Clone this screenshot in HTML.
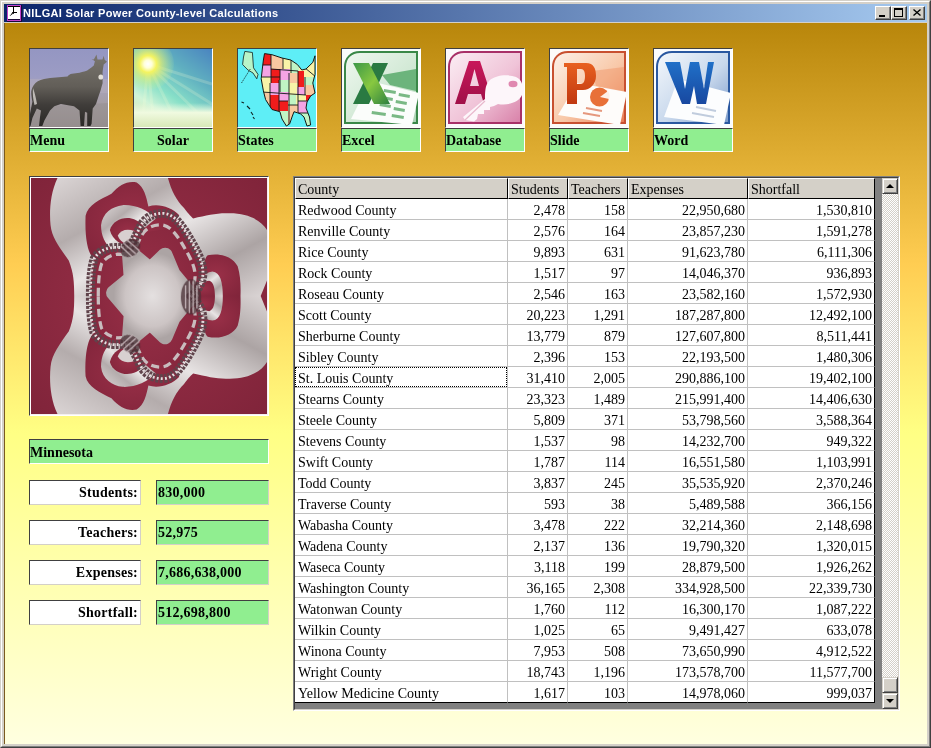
<!DOCTYPE html>
<html><head><meta charset="utf-8">
<style>
*{margin:0;padding:0;box-sizing:border-box}
html,body{width:931px;height:748px;overflow:hidden;background:#d4d0c8}
body{position:relative;font-family:"Liberation Sans",sans-serif;-webkit-font-smoothing:antialiased}
#grid,.lbl,.sl,.sv,#ttext{will-change:transform}
.a{position:absolute}
#frame{left:0;top:0;width:931px;height:748px;background:#d4d0c8;border-top:1px solid #d4d0c8;border-left:1px solid #d4d0c8;border-right:1px solid #404040;border-bottom:1px solid #404040}
#frame2{left:1px;top:1px;width:929px;height:746px;border-top:1px solid #fff;border-left:1px solid #fff;border-right:1px solid #808080;border-bottom:1px solid #808080}
#title{left:4px;top:4px;width:923px;height:18px;background:linear-gradient(to right,#0a246a,#a6caf0)}
#ttext{left:23px;top:7px;color:#fff;font:bold 11px "Liberation Sans",sans-serif;letter-spacing:.32px;white-space:nowrap;line-height:13px}
.cbtn{top:6px;width:16px;height:14px;background:#d4d0c8;border-top:1px solid #fff;border-left:1px solid #fff;border-right:1px solid #404040;border-bottom:1px solid #404040;box-shadow:inset -1px -1px 0 #808080}
#client{left:4px;top:23px;width:923px;height:721px;background:linear-gradient(to bottom,rgb(184,134,11) 0px,rgb(255,205,82) 241px,rgb(255,255,132) 410px,rgb(255,255,225) 725px);border-left:1px solid #7a5a20}
.ibox{width:80px;height:80px;border-top:1px solid #404040;border-left:1px solid #404040;border-right:1px solid #fff;border-bottom:1px solid #fff;overflow:hidden}
.ibox svg{display:block}
.lbl{padding-top:2px;width:80px;height:24px;background:#90ee90;border-top:1px solid #404040;border-left:1px solid #404040;border-right:1px solid #fff;border-bottom:1px solid #fff;font:bold 14px "Liberation Serif",serif;color:#000;line-height:20px;padding-left:0;white-space:nowrap;overflow:hidden}
.sl{padding-top:1px;letter-spacing:.25px;width:112px;height:25px;background:#fff;border-top:1px solid #404040;border-left:1px solid #404040;border-right:1px solid #d4d0c8;border-bottom:1px solid #d4d0c8;font:bold 14px "Liberation Serif",serif;text-align:right;padding-right:2px;line-height:21px;white-space:nowrap}
.sv{padding-top:1px;letter-spacing:.25px;width:113px;height:25px;background:#90ee90;border-top:1px solid #404040;border-left:1px solid #404040;border-right:1px solid #d4d0c8;border-bottom:1px solid #d4d0c8;font:bold 14px "Liberation Serif",serif;padding-left:1px;line-height:21px;white-space:nowrap}
#grid{left:293px;top:176px;width:607px;height:535px;border-top:1px solid #808080;border-left:1px solid #808080;border-right:1px solid #fff;border-bottom:1px solid #fff;background:#808080}
#grid2{left:0;top:0;width:605px;height:533px;border-top:1px solid #404040;border-left:1px solid #404040;border-right:1px solid #d4d0c8;border-bottom:1px solid #d4d0c8;background:#808080}
.hd{top:0;padding-top:1px;height:21px;background:#d4d0c8;border-top:1px solid #fff;border-left:1px solid #fff;border-right:1px solid #000;border-bottom:1px solid #000;font:14px "Liberation Serif",serif;line-height:19px;padding-left:2px;white-space:nowrap;overflow:hidden}
.row{left:0;height:21px;width:580px;background:#fff}
.c{position:absolute;top:0;padding-top:2px;height:21px;border-right:1px solid #c0c0c0;border-bottom:1px solid #c0c0c0;font:14px "Liberation Serif",serif;line-height:20px;white-space:nowrap;overflow:hidden}
.c.n{text-align:right;padding-right:2px}
.c.t{padding-left:3px}

#focus{left:0;top:189px;width:212px;height:20px;border:1px dotted #000}
#sb{left:587px;top:0;width:16px;height:531px;background-color:#fff;background-image:linear-gradient(45deg,#d4d0c8 25%,transparent 25%,transparent 75%,#d4d0c8 75%),linear-gradient(45deg,#d4d0c8 25%,transparent 25%,transparent 75%,#d4d0c8 75%);background-size:2px 2px;background-position:0 0,1px 1px}
.sbb{left:0;width:16px;height:16px;background:#d4d0c8;border-top:1px solid #d4d0c8;border-left:1px solid #d4d0c8;border-right:1px solid #404040;border-bottom:1px solid #404040;box-shadow:inset 1px 1px 0 #fff,inset -1px -1px 0 #808080}
.arr{position:absolute;left:3px;width:0;height:0;border-left:4px solid transparent;border-right:4px solid transparent}
.arr.up{top:5px;border-bottom:4px solid #000}
.arr.dn{top:5px;border-top:4px solid #000}
#frac{left:29px;top:176px;width:240px;height:240px;border-top:1px solid #404040;border-left:1px solid #404040;border-right:1px solid #fff;border-bottom:1px solid #fff;background:#8a2a40;overflow:hidden}
#frac2{left:0;top:0;width:238px;height:238px;border-top:1px solid #fff;border-left:1px solid #fff;border-right:1px solid #f4f0f0;border-bottom:1px solid #f4f0f0;overflow:hidden}
</style></head><body>
<div id="frame" class="a"></div>
<div id="frame2" class="a"></div>
<div id="title" class="a"></div>
<div id="ttext" class="a">NILGAI Solar Power County-level Calculations</div>
<svg class="a" style="left:7px;top:5px" width="15" height="17" viewBox="0 0 15 17"><rect x="0" y="0" width="15" height="17" fill="#1a0838"/><rect x="0.5" y="0.5" width="13" height="15" fill="none" stroke="#c040c8" stroke-width="1"/><rect x="1" y="1" width="12" height="13" fill="#fff"/><rect x="1" y="1" width="12" height="1" fill="#000"/><rect x="6" y="1" width="1" height="7" fill="#000"/><rect x="6" y="7" width="4" height="1" fill="#000"/><path d="M6.5,7.5 L3,10.5" stroke="#000" stroke-width="1.2" stroke-dasharray="1.2 .8"/><circle cx="6" cy="8" r="1" fill="#000"/></svg>
<div class="cbtn a" style="left:875px"><div class="a" style="left:3px;top:8px;width:6px;height:2px;background:#000"></div></div>
<div class="cbtn a" style="left:891px"><div class="a" style="left:2px;top:1px;width:9px;height:9px;border:1px solid #000;border-top-width:2px"></div></div>
<div class="cbtn a" style="left:909px"><svg class="a" style="left:3px;top:2px" width="8" height="7" viewBox="0 0 8 7"><path d="M0.5,0.5 L7.5,6.5 M7.5,0.5 L0.5,6.5" stroke="#000" stroke-width="1.35"/></svg></div>
<div id="client" class="a"></div>

<div class="ibox a" style="left:29px;top:48px"><svg width="78" height="78" viewBox="0 0 78 78">
<defs><linearGradient id="nsky" x1="0" y1="0" x2="0" y2="1"><stop offset="0" stop-color="#9496c2"/><stop offset=".35" stop-color="#9c9cc4"/><stop offset=".5" stop-color="#a8a2b8"/><stop offset=".75" stop-color="#a49c9e"/><stop offset="1" stop-color="#9a9292"/></linearGradient>
<linearGradient id="nbody" x1="0" y1="0" x2="0" y2="1"><stop offset="0" stop-color="#7a766e"/><stop offset=".45" stop-color="#625e58"/><stop offset=".7" stop-color="#403d3a"/><stop offset="1" stop-color="#2a2826"/></linearGradient></defs>
<rect width="78" height="78" fill="url(#nsky)"/>
<rect y="30" width="78" height="14" fill="#b8b0bc" opacity=".45"/><path d="M0,58 L78,54 L78,78 L0,78 Z" fill="#8c8688" opacity=".35"/>
<path d="M3.5,36.4 C6,33 9,31 14,30 L20,29 L37.5,27.6 C38.5,26 40,25 42,24.8 L49.5,23.8 C53,23 56,22 57.2,21.6 C60,19.5 62.5,18 63.8,16.6 L64.9,12.3 L61.6,10 L63.8,10.5 L66.5,5.5 L67.5,10.5 L72.5,10.5 L73.7,6.8 L74.6,10.8 L77,12.8 L73.7,15.5 C73.3,18 72.8,21 72.6,23.2 L72.6,34.2 C71.5,38 70.5,42 69.3,45.1 C68,49 67,52 66,55 L62.7,59.4 L61.6,74.8 L60.5,77 L57.2,77 L57.2,63.8 L55,62.7 L54,77 L50.6,77 L49.5,61.6 L44,57.2 L30.9,55 L24.3,57.2 L20,61.6 L14.4,71.5 L12.3,77 L9,77 L10,68 L11,61.6 L6.8,59.4 L2.4,69 L0.5,77 L-2,77 L0.2,63.8 L2.4,52.8 C1.5,48 1,44 1.3,41.9 C2,39 2.8,37.5 3.5,36.4 Z" fill="url(#nbody)"/>
<ellipse cx="70.8" cy="28" rx="2.4" ry="2.6" fill="#e4e0d8"/>
<path d="M3,39 C5,44 6,50 7,55 L4.5,56 C3,50 2.5,45 3,39 Z" fill="#d8d4d0" opacity=".8"/>
</svg></div>
<div class="lbl a" style="left:29px;top:128px">Menu</div>
<div class="ibox a" style="left:133px;top:48px"><svg width="78" height="78" viewBox="0 0 78 78">
<defs><linearGradient id="ssky" x1="1" y1="0" x2="0.3" y2="1"><stop offset="0" stop-color="#4a84c0"/><stop offset=".35" stop-color="#60b0c0"/><stop offset=".65" stop-color="#88e0c8"/><stop offset=".85" stop-color="#d0f4d8"/><stop offset="1" stop-color="#d8ecc0"/></linearGradient>
<radialGradient id="ssun" cx="14" cy="15" r="28" gradientUnits="userSpaceOnUse"><stop offset="0" stop-color="#ffffff"/><stop offset=".14" stop-color="#ffffd8"/><stop offset=".3" stop-color="#f4f460"/><stop offset=".5" stop-color="#e8f070" stop-opacity=".65"/><stop offset="1" stop-color="#c0f0a0" stop-opacity="0"/></radialGradient>
<linearGradient id="shor" x1="0" y1="0" x2="0" y2="1"><stop offset="0" stop-color="#e8f8e0" stop-opacity="0"/><stop offset=".4" stop-color="#f0fae0"/><stop offset="1" stop-color="#d8e8b8"/></linearGradient></defs>
<rect width="78" height="78" fill="url(#ssky)"/>
<g stroke="#f8ffd8" stroke-opacity=".2" stroke-width="3">
<path d="M14,15 L78,55 M14,15 L70,70 M14,15 L20,78 M14,15 L8,78 M14,15 L78,35 M14,15 L45,78"/></g>
<rect y="54" width="78" height="24" fill="url(#shor)"/>
<circle cx="14" cy="15" r="26" fill="url(#ssun)"/>
</svg></div>
<div class="lbl a" style="left:133px;top:128px;text-align:center">Solar</div>
<div class="ibox a" style="left:237px;top:48px"><svg width="78" height="78" viewBox="0 0 78 78">
<defs><clipPath id="usa"><path d="M26.5,4.6 L34,5.7 L44,9 L52.8,11 L59.4,15.5 L63.8,21 L68,20 L74.8,13.4 L77,6.8 L77,25.4 L74.8,34 L77,44 L72.6,47 L69,53 L68,59 L71.5,68 L72.6,76 L69,77 L66,68 L62.7,65 L59.4,63.8 L56,62.7 L54,68 L51.7,74.8 L48.4,77 L44,70 L41.9,62.7 L34,60.5 L31,56 L27.6,50.6 L25.4,41.9 L23.2,29.8 L24.3,20 L25.4,11 Z"/></clipPath></defs>
<rect width="78" height="78" fill="#5eeef6"/>
<path d="M6.8,2.4 L14.4,3.5 L15.5,18.8 L20,25.4 L18.8,29.8 L15,24 L10,21 L6,17 L4.6,15.5 L5.5,8 Z" fill="#b8f4c8" stroke="#102020" stroke-width=".8"/>
<path d="M12.3,20 L3.5,34" stroke="#102020" stroke-width=".8" stroke-dasharray="1.5 1"/>
<path d="M3.5,53 L6,54 M9,57 L12,60 M13,63 L15,66 M15,68 L16.5,70" stroke="#102020" stroke-width="1.1"/>
<g clip-path="url(#usa)">
<rect x="20" y="0" width="60" height="80" fill="#f8f4a8"/>
<rect x="24" y="3" width="9" height="13" fill="#f01c1c"/>
<rect x="33" y="6" width="12" height="14" fill="#f8c8a0"/>
<rect x="45" y="8" width="8" height="12" fill="#f8f4a8"/>
<rect x="53" y="10" width="8" height="14" fill="#c0f4c4"/>
<rect x="61" y="14" width="17" height="14" fill="#f8f4a8"/>
<rect x="24" y="16" width="9" height="12" fill="#f4a4e4"/>
<rect x="33" y="20" width="9" height="14" fill="#f01c1c"/>
<rect x="42" y="20" width="10" height="11" fill="#f4a4e4"/>
<rect x="52" y="24" width="8" height="10" fill="#f8c8a0"/>
<rect x="60" y="22" width="6" height="16" fill="#f01c1c"/>
<rect x="66" y="28" width="12" height="8" fill="#c0f4c4"/>
<rect x="24" y="28" width="8" height="15" fill="#f8f4a8"/>
<rect x="32" y="34" width="9" height="12" fill="#f4a4e4"/>
<rect x="41" y="31" width="10" height="12" fill="#c0f4c4"/>
<rect x="51" y="34" width="8" height="12" fill="#f8f4a8"/>
<rect x="59" y="38" width="8" height="8" fill="#f4a4e4"/>
<rect x="67" y="36" width="11" height="10" fill="#f8c8a0"/>
<rect x="24" y="43" width="8" height="12" fill="#f8c8a0"/>
<rect x="32" y="46" width="9" height="16" fill="#f01c1c"/>
<rect x="41" y="43" width="10" height="9" fill="#f4a4e4"/>
<rect x="51" y="46" width="7" height="10" fill="#c0f4c4"/>
<rect x="58" y="46" width="10" height="6" fill="#f8f4a8"/>
<rect x="68" y="46" width="10" height="8" fill="#f01c1c"/>
<rect x="41" y="52" width="9" height="10" fill="#f01c1c"/>
<rect x="50" y="56" width="10" height="22" fill="#f8c8a0"/>
<rect x="60" y="52" width="10" height="12" fill="#f4a4e4"/>
<rect x="40" y="62" width="10" height="16" fill="#c0f4c4"/>
<rect x="60" y="64" width="18" height="14" fill="#c0f4c4"/>
<g stroke="#101818" stroke-width=".9" fill="none"><path d="M24,16 L33,16 L33,34 M24,28 L42,28 M33,20 L60,22 M42,20 L42,43 M24,43 L68,46 M32,34 L32,62 M41,31 L41,78 M51,24 L51,78 M60,22 L60,64 M67,28 L67,46 M33,6 L33,16 M45,8 L45,20 M53,10 L53,24 M41,52 L50,52 M50,56 L60,56 M60,52 L78,52 M60,64 L78,64 M61,14 L78,28"/></g>
</g>
<path d="M26.5,4.6 L34,5.7 L44,9 L52.8,11 L59.4,15.5 L63.8,21 L68,20 L74.8,13.4 L77,6.8 L77,25.4 L74.8,34 L77,44 L72.6,47 L69,53 L68,59 L71.5,68 L72.6,76 L69,77 L66,68 L62.7,65 L59.4,63.8 L56,62.7 L54,68 L51.7,74.8 L48.4,77 L44,70 L41.9,62.7 L34,60.5 L31,56 L27.6,50.6 L25.4,41.9 L23.2,29.8 L24.3,20 L25.4,11 Z" fill="none" stroke="#101818" stroke-width="1"/>
</svg></div>
<div class="lbl a" style="left:237px;top:128px">States</div>
<div class="ibox a" style="left:341px;top:48px"><svg width="78" height="78" viewBox="0 0 78 78">
<defs><linearGradient id="xbg" x1="0" y1="0" x2="1" y2="1"><stop offset="0" stop-color="#f0f8f0"/><stop offset=".6" stop-color="#d0e8d4"/><stop offset="1" stop-color="#a8d0b0"/></linearGradient>
<linearGradient id="xl" x1="0" y1="0" x2="1" y2="1"><stop offset="0" stop-color="#3c9848"/><stop offset=".5" stop-color="#88c840"/><stop offset="1" stop-color="#2c8040"/></linearGradient></defs>
<rect width="78" height="78" fill="#fafcfa"/>
<path d="M3,74 L3,18 C3,9 9,3 18,3 L75,3 L75,74 Z" fill="url(#xbg)" stroke="#3a8848" stroke-width="2"/>
<path d="M40,26 L74,20 L74,42 L48,36 Z" fill="#6cb47c"/>
<path d="M28,32 L77,44 L70,76 L9,70 Z" fill="#fbfdfb"/>
<g fill="#5aa868"><path d="M42,40 l12,2 l-.5,3 l-12,-2 Z M57,44 l11,2 l-.5,3 l-11,-2 Z M40,47 l11,2 l-.5,3 l-11,-2 Z M54,51 l11,2 l-.5,3 l-11,-2 Z M38,54 l11,2 l-.5,3 l-11,-2 Z M52,58 l11,2 l-.5,3 l-11,-2 Z M30,62 l14,2 l-.5,3 l-14,-2 Z M50,65 l12,2 l-.5,3 l-12,-2 Z" opacity=".8"/></g>
<path d="M31,14 L46,14 L27,55 L11,55 Z" fill="#2a7a42"/>
<path d="M11,14 L27,14 L48,55 L32,55 Z" fill="url(#xl)"/>
</svg></div>
<div class="lbl a" style="left:341px;top:128px">Excel</div>
<div class="ibox a" style="left:445px;top:48px"><svg width="78" height="78" viewBox="0 0 78 78">
<defs><linearGradient id="abg" x1="0" y1="0" x2="1" y2="1"><stop offset="0" stop-color="#fbeef4"/><stop offset=".55" stop-color="#f0c4d8"/><stop offset="1" stop-color="#d880a8"/></linearGradient>
<linearGradient id="aa" x1="0" y1="0" x2="0" y2="1"><stop offset="0" stop-color="#c8185a"/><stop offset="1" stop-color="#a01048"/></linearGradient></defs>
<rect width="78" height="78" fill="#fcf8fa"/>
<path d="M3,74 L3,18 C3,9 9,3 18,3 L75,3 L75,74 Z" fill="url(#abg)" stroke="#a83068" stroke-width="2"/>
<path d="M9,55 L23,12 L34,12 L48,55 L38,55 L35,45 L22,45 L19,55 Z M24,37 L33,37 L28.5,20 Z" fill="url(#aa)" fill-rule="evenodd"/>
<path d="M43,32 C49,26 62,25 70,28 C77,31 78,40 76,46 C73,53 62,57 52,55 L48,57 L44,58 L44,61 L38,61 L38,65 L32,65 L31,70 L28,72.5 L19,71 L17,68 L39,50 C39,44 39,36 43,32 Z" fill="#fdf6fa"/><path d="M19,71 L39,52" stroke="#e8b8cc" stroke-width="1.2"/>
<ellipse cx="67" cy="35" rx="4.5" ry="3.2" fill="#e088b0"/>
</svg></div>
<div class="lbl a" style="left:445px;top:128px">Database</div>
<div class="ibox a" style="left:549px;top:48px"><svg width="78" height="78" viewBox="0 0 78 78">
<defs><linearGradient id="pbg" x1="0" y1="0" x2="1" y2="1"><stop offset="0" stop-color="#fdf2ea"/><stop offset=".55" stop-color="#f8c8a8"/><stop offset="1" stop-color="#e87850"/></linearGradient>
<linearGradient id="pp" x1="0" y1="0" x2="0" y2="1"><stop offset="0" stop-color="#e86020"/><stop offset="1" stop-color="#c03810"/></linearGradient></defs>
<rect width="78" height="78" fill="#fdfaf8"/>
<path d="M3,74 L3,18 C3,9 9,3 18,3 L75,3 L75,74 Z" fill="url(#pbg)" stroke="#c85030" stroke-width="2"/>
<path d="M42,22 L74,18 L74,42 L46,37 Z" fill="#f09a70" opacity=".55"/><path d="M27,34 L77,43 L70,76 L8,66 Z" fill="#fefcfa"/>
<path d="M14,14 L36,14 C44,14 46,20 46,27 C46,35 40,41 33,41 L27,41 L27,55 L17,55 L17,18 L14,18 Z M27,20 L27,35 L31,35 C34,35 35,31 35,27 C35,23 34,20 31,20 Z" fill="url(#pp)" fill-rule="evenodd"/>
<circle cx="49.5" cy="48" r="9.5" fill="#e87038"/>
<path d="M50,48 L58,42 C60,45 60,48 59,50 Z" fill="#fdf0e8"/>
<path d="M36,59 L52,62 M33,64 L50,67" stroke="#e08060" stroke-width="2" opacity=".8"/>
</svg></div>
<div class="lbl a" style="left:549px;top:128px">Slide</div>
<div class="ibox a" style="left:653px;top:48px"><svg width="78" height="78" viewBox="0 0 78 78">
<defs><linearGradient id="wbg" x1="0" y1="0" x2="1" y2="1"><stop offset="0" stop-color="#f4f8fc"/><stop offset=".55" stop-color="#c8d8ec"/><stop offset="1" stop-color="#7898c8"/></linearGradient>
<linearGradient id="ww" x1="0" y1="0" x2="0" y2="1"><stop offset="0" stop-color="#2070c8"/><stop offset="1" stop-color="#1848a0"/></linearGradient></defs>
<rect width="78" height="78" fill="#fafcfe"/>
<path d="M3,74 L3,18 C3,9 9,3 18,3 L75,3 L75,74 Z" fill="url(#wbg)" stroke="#2a58a0" stroke-width="2"/>
<path d="M24,30 L77,44 L70,76 L10,68 Z" fill="#fcfdfe"/>
<path d="M42,58 L62,62 M38,64 L60,68" stroke="#a8b8d0" stroke-width="2" opacity=".7"/>
<path d="M11,13 L26,13 L31,40 L36,13 L45,13 L50,40 L54,13 L60,13 L52,55 L43,55 L40,37 L36,55 L28,55 Z" fill="url(#ww)"/>
</svg></div>
<div class="lbl a" style="left:653px;top:128px">Word</div>

<div id="frac" class="a"><div id="frac2" class="a"><svg width="236" height="236" viewBox="0 0 748 748" style="display:block">
<defs>
<linearGradient id="fs1" x1="0" y1="0" x2="1" y2="1"><stop offset="0" stop-color="#dcd6d6"/><stop offset=".3" stop-color="#b4acac"/><stop offset=".5" stop-color="#e8e4e4"/><stop offset=".75" stop-color="#aca4a4"/><stop offset="1" stop-color="#dcd6d6"/></linearGradient>
<radialGradient id="fs2" cx=".5" cy=".5" r=".5"><stop offset="0" stop-color="#e4e0e0"/><stop offset=".7" stop-color="#ccc4c4"/><stop offset="1" stop-color="#aca4a4"/></radialGradient>
<radialGradient id="fm" cx=".5" cy=".5" r=".7"><stop offset="0" stop-color="#9a3048"/><stop offset="1" stop-color="#80243a"/></radialGradient>
<g id="fh">
<path d="M84,0 L434,0 C445,40 460,70 485,95 C500,115 510,125 514,128 C560,118 590,110 630,112 C690,112 730,135 748,165 L748,325 L728,374 L137,374 C137,330 135,300 120,262 C92,222 66,190 62,150 C58,110 60,50 84,0 Z" fill="url(#fs1)"/>
</g>
<g id="fp">
<path d="M173,120 C180,85 220,68 255,50 C280,22 305,8 335,14 C358,28 366,60 372,90 C405,80 445,92 470,118 L440,160 L340,175 L315,216 L254,221 L200,258 C182,240 170,200 173,120 Z" fill="url(#fm)"/>
<path d="M222,150 C226,110 258,90 290,86 C330,84 368,100 396,128 L340,175 L315,216 L258,226 C234,212 222,182 222,150 Z" fill="url(#fs1)"/>
<path d="M250,165 C258,136 290,122 318,128 C342,134 358,150 366,168 L315,216 C288,214 258,198 250,165 Z" fill="url(#fm)"/>
<path d="M275,182 C285,164 305,160 328,168 L315,216 C295,208 280,198 275,182 Z" fill="#d8d0d0"/>
<path d="M508,374 L540,330 C545,290 548,255 560,245 C600,236 640,250 655,280 C664,310 665,340 664,374 Z" fill="url(#fm)"/>
<path d="M508,374 C530,330 545,298 575,296 C600,298 608,330 608,374 Z" fill="url(#fs1)"/>
<path d="M508,374 C530,350 545,326 565,326 C580,330 583,355 583,374 Z" fill="url(#fm)"/>

</g>
</defs>
<rect width="748" height="748" fill="url(#fm)"/>
<use href="#fh"/>
<use href="#fh" transform="matrix(1 0 0 -1 0 748)"/>
<path id="ring" d="M188,374 C188,320 192,280 200,256 C215,230 240,222 260,220 C285,220 305,222 315,216 C330,195 340,160 356,139 C372,120 392,112 420,112 C450,114 470,140 490,170 C520,220 545,260 545,300 C545,335 525,360 508,374 C525,388 545,413 545,448 C545,488 520,528 490,578 C470,608 450,634 420,636 C392,636 372,628 356,609 C340,588 330,553 315,532 C305,526 285,528 260,528 C240,526 215,518 200,492 C192,468 188,428 188,374 Z" fill="url(#fm)"/>
<use href="#fp"/>
<use href="#fp" transform="matrix(1 0 0 -1 0 748)"/>

<path d="M188,374 C188,320 192,280 200,256 C215,230 240,222 260,220 C285,220 305,222 315,216 C330,195 340,160 356,139 C372,120 392,112 420,112 C450,114 470,140 490,170 C520,220 545,260 545,300 C545,335 525,360 508,374 C525,388 545,413 545,448 C545,488 520,528 490,578 C470,608 450,634 420,636 C392,636 372,628 356,609 C340,588 330,553 315,532 C305,526 285,528 260,528 C240,526 215,518 200,492 C192,468 188,428 188,374 Z" fill="none" stroke="#c8bcbe" stroke-width="12" stroke-dasharray="30 16" transform="translate(368 374) scale(.86) translate(-368 -374)"/><path d="M262,364 L318,318 L312,236 L378,290 L425,245 L450,305 L508,374 L450,443 L425,503 L378,458 L312,512 L318,430 Z" fill="url(#fs2)" stroke="url(#fs2)" stroke-width="48" stroke-linejoin="round"/><path d="M188,374 C188,320 192,280 200,256 C215,230 240,222 260,220 C285,220 305,222 315,216 C330,195 340,160 356,139 C372,120 392,112 420,112 C450,114 470,140 490,170 C520,220 545,260 545,300 C545,335 525,360 508,374 C525,388 545,413 545,448 C545,488 520,528 490,578 C470,608 450,634 420,636 C392,636 372,628 356,609 C340,588 330,553 315,532 C305,526 285,528 260,528 C240,526 215,518 200,492 C192,468 188,428 188,374 Z" fill="none" stroke="#60444c" stroke-width="28" stroke-dasharray="9 4"/>
<path d="M188,374 C188,320 192,280 200,256 C215,230 240,222 260,220 C285,220 305,222 315,216 C330,195 340,160 356,139 C372,120 392,112 420,112 C450,114 470,140 490,170 C520,220 545,260 545,300 C545,335 525,360 508,374 C525,388 545,413 545,448 C545,488 520,528 490,578 C470,608 450,634 420,636 C392,636 372,628 356,609 C340,588 330,553 315,532 C305,526 285,528 260,528 C240,526 215,518 200,492 C192,468 188,428 188,374 Z" fill="none" stroke="#e8dcdf" stroke-width="9" stroke-dasharray="6 7"/>
<g fill="#4a3036" opacity=".75">
<ellipse cx="315" cy="222" rx="34" ry="26" transform="rotate(-35 315 222)"/>
<ellipse cx="315" cy="526" rx="34" ry="26" transform="rotate(35 315 526)"/>
<ellipse cx="507" cy="377" rx="32" ry="56"/>
</g>
<g stroke="#c8b8bc" stroke-width="4">
<path d="M292,205 L332,240 M304,196 L344,231 M284,216 L322,251"/>
<path d="M292,543 L332,508 M304,552 L344,517 M284,532 L322,497"/>
<path d="M490,340 L490,414 M502,326 L502,428 M514,326 L514,428 M526,340 L526,414"/>
</g>
</svg>
</div></div>
<div class="lbl a" style="left:29px;top:439px;width:240px;height:25px;line-height:22px">Minnesota</div>
<div class="sl a" style="left:29px;top:480px">Students:</div>
<div class="sv a" style="left:156px;top:480px">830,000</div>
<div class="sl a" style="left:29px;top:520px">Teachers:</div>
<div class="sv a" style="left:156px;top:520px">52,975</div>
<div class="sl a" style="left:29px;top:560px">Expenses:</div>
<div class="sv a" style="left:156px;top:560px">7,686,638,000</div>
<div class="sl a" style="left:29px;top:600px">Shortfall:</div>
<div class="sv a" style="left:156px;top:600px">512,698,800</div>
<div id="grid" class="a"><div id="grid2" class="a">
<div class="hd a" style="left:0px;width:213px">County</div>
<div class="hd a" style="left:213px;width:60px">Students</div>
<div class="hd a" style="left:273px;width:60px">Teachers</div>
<div class="hd a" style="left:333px;width:120px">Expenses</div>
<div class="hd a" style="left:453px;width:127px">Shortfall</div>
<div class="row a" style="top:21px"><div class="c t" style="left:0px;width:213px;">Redwood County</div><div class="c n" style="left:213px;width:60px;">2,478</div><div class="c n" style="left:273px;width:60px;">158</div><div class="c n" style="left:333px;width:120px;">22,950,680</div><div class="c n" style="left:453px;width:127px;border-right-color:#000;">1,530,810</div></div>
<div class="row a" style="top:42px"><div class="c t" style="left:0px;width:213px;">Renville County</div><div class="c n" style="left:213px;width:60px;">2,576</div><div class="c n" style="left:273px;width:60px;">164</div><div class="c n" style="left:333px;width:120px;">23,857,230</div><div class="c n" style="left:453px;width:127px;border-right-color:#000;">1,591,278</div></div>
<div class="row a" style="top:63px"><div class="c t" style="left:0px;width:213px;">Rice County</div><div class="c n" style="left:213px;width:60px;">9,893</div><div class="c n" style="left:273px;width:60px;">631</div><div class="c n" style="left:333px;width:120px;">91,623,780</div><div class="c n" style="left:453px;width:127px;border-right-color:#000;">6,111,306</div></div>
<div class="row a" style="top:84px"><div class="c t" style="left:0px;width:213px;">Rock County</div><div class="c n" style="left:213px;width:60px;">1,517</div><div class="c n" style="left:273px;width:60px;">97</div><div class="c n" style="left:333px;width:120px;">14,046,370</div><div class="c n" style="left:453px;width:127px;border-right-color:#000;">936,893</div></div>
<div class="row a" style="top:105px"><div class="c t" style="left:0px;width:213px;">Roseau County</div><div class="c n" style="left:213px;width:60px;">2,546</div><div class="c n" style="left:273px;width:60px;">163</div><div class="c n" style="left:333px;width:120px;">23,582,160</div><div class="c n" style="left:453px;width:127px;border-right-color:#000;">1,572,930</div></div>
<div class="row a" style="top:126px"><div class="c t" style="left:0px;width:213px;">Scott County</div><div class="c n" style="left:213px;width:60px;">20,223</div><div class="c n" style="left:273px;width:60px;">1,291</div><div class="c n" style="left:333px;width:120px;">187,287,800</div><div class="c n" style="left:453px;width:127px;border-right-color:#000;">12,492,100</div></div>
<div class="row a" style="top:147px"><div class="c t" style="left:0px;width:213px;">Sherburne County</div><div class="c n" style="left:213px;width:60px;">13,779</div><div class="c n" style="left:273px;width:60px;">879</div><div class="c n" style="left:333px;width:120px;">127,607,800</div><div class="c n" style="left:453px;width:127px;border-right-color:#000;">8,511,441</div></div>
<div class="row a" style="top:168px"><div class="c t" style="left:0px;width:213px;">Sibley County</div><div class="c n" style="left:213px;width:60px;">2,396</div><div class="c n" style="left:273px;width:60px;">153</div><div class="c n" style="left:333px;width:120px;">22,193,500</div><div class="c n" style="left:453px;width:127px;border-right-color:#000;">1,480,306</div></div>
<div class="row a" style="top:189px"><div class="c t" style="left:0px;width:213px;">St. Louis County</div><div class="c n" style="left:213px;width:60px;">31,410</div><div class="c n" style="left:273px;width:60px;">2,005</div><div class="c n" style="left:333px;width:120px;">290,886,100</div><div class="c n" style="left:453px;width:127px;border-right-color:#000;">19,402,100</div></div>
<div class="row a" style="top:210px"><div class="c t" style="left:0px;width:213px;">Stearns County</div><div class="c n" style="left:213px;width:60px;">23,323</div><div class="c n" style="left:273px;width:60px;">1,489</div><div class="c n" style="left:333px;width:120px;">215,991,400</div><div class="c n" style="left:453px;width:127px;border-right-color:#000;">14,406,630</div></div>
<div class="row a" style="top:231px"><div class="c t" style="left:0px;width:213px;">Steele County</div><div class="c n" style="left:213px;width:60px;">5,809</div><div class="c n" style="left:273px;width:60px;">371</div><div class="c n" style="left:333px;width:120px;">53,798,560</div><div class="c n" style="left:453px;width:127px;border-right-color:#000;">3,588,364</div></div>
<div class="row a" style="top:252px"><div class="c t" style="left:0px;width:213px;">Stevens County</div><div class="c n" style="left:213px;width:60px;">1,537</div><div class="c n" style="left:273px;width:60px;">98</div><div class="c n" style="left:333px;width:120px;">14,232,700</div><div class="c n" style="left:453px;width:127px;border-right-color:#000;">949,322</div></div>
<div class="row a" style="top:273px"><div class="c t" style="left:0px;width:213px;">Swift County</div><div class="c n" style="left:213px;width:60px;">1,787</div><div class="c n" style="left:273px;width:60px;">114</div><div class="c n" style="left:333px;width:120px;">16,551,580</div><div class="c n" style="left:453px;width:127px;border-right-color:#000;">1,103,991</div></div>
<div class="row a" style="top:294px"><div class="c t" style="left:0px;width:213px;">Todd County</div><div class="c n" style="left:213px;width:60px;">3,837</div><div class="c n" style="left:273px;width:60px;">245</div><div class="c n" style="left:333px;width:120px;">35,535,920</div><div class="c n" style="left:453px;width:127px;border-right-color:#000;">2,370,246</div></div>
<div class="row a" style="top:315px"><div class="c t" style="left:0px;width:213px;">Traverse County</div><div class="c n" style="left:213px;width:60px;">593</div><div class="c n" style="left:273px;width:60px;">38</div><div class="c n" style="left:333px;width:120px;">5,489,588</div><div class="c n" style="left:453px;width:127px;border-right-color:#000;">366,156</div></div>
<div class="row a" style="top:336px"><div class="c t" style="left:0px;width:213px;">Wabasha County</div><div class="c n" style="left:213px;width:60px;">3,478</div><div class="c n" style="left:273px;width:60px;">222</div><div class="c n" style="left:333px;width:120px;">32,214,360</div><div class="c n" style="left:453px;width:127px;border-right-color:#000;">2,148,698</div></div>
<div class="row a" style="top:357px"><div class="c t" style="left:0px;width:213px;">Wadena County</div><div class="c n" style="left:213px;width:60px;">2,137</div><div class="c n" style="left:273px;width:60px;">136</div><div class="c n" style="left:333px;width:120px;">19,790,320</div><div class="c n" style="left:453px;width:127px;border-right-color:#000;">1,320,015</div></div>
<div class="row a" style="top:378px"><div class="c t" style="left:0px;width:213px;">Waseca County</div><div class="c n" style="left:213px;width:60px;">3,118</div><div class="c n" style="left:273px;width:60px;">199</div><div class="c n" style="left:333px;width:120px;">28,879,500</div><div class="c n" style="left:453px;width:127px;border-right-color:#000;">1,926,262</div></div>
<div class="row a" style="top:399px"><div class="c t" style="left:0px;width:213px;">Washington County</div><div class="c n" style="left:213px;width:60px;">36,165</div><div class="c n" style="left:273px;width:60px;">2,308</div><div class="c n" style="left:333px;width:120px;">334,928,500</div><div class="c n" style="left:453px;width:127px;border-right-color:#000;">22,339,730</div></div>
<div class="row a" style="top:420px"><div class="c t" style="left:0px;width:213px;">Watonwan County</div><div class="c n" style="left:213px;width:60px;">1,760</div><div class="c n" style="left:273px;width:60px;">112</div><div class="c n" style="left:333px;width:120px;">16,300,170</div><div class="c n" style="left:453px;width:127px;border-right-color:#000;">1,087,222</div></div>
<div class="row a" style="top:441px"><div class="c t" style="left:0px;width:213px;">Wilkin County</div><div class="c n" style="left:213px;width:60px;">1,025</div><div class="c n" style="left:273px;width:60px;">65</div><div class="c n" style="left:333px;width:120px;">9,491,427</div><div class="c n" style="left:453px;width:127px;border-right-color:#000;">633,078</div></div>
<div class="row a" style="top:462px"><div class="c t" style="left:0px;width:213px;">Winona County</div><div class="c n" style="left:213px;width:60px;">7,953</div><div class="c n" style="left:273px;width:60px;">508</div><div class="c n" style="left:333px;width:120px;">73,650,990</div><div class="c n" style="left:453px;width:127px;border-right-color:#000;">4,912,522</div></div>
<div class="row a" style="top:483px"><div class="c t" style="left:0px;width:213px;">Wright County</div><div class="c n" style="left:213px;width:60px;">18,743</div><div class="c n" style="left:273px;width:60px;">1,196</div><div class="c n" style="left:333px;width:120px;">173,578,700</div><div class="c n" style="left:453px;width:127px;border-right-color:#000;">11,577,700</div></div>
<div class="row a" style="top:504px"><div class="c t" style="left:0px;width:213px;border-bottom-color:#000;">Yellow Medicine County</div><div class="c n" style="left:213px;width:60px;border-bottom-color:#000;">1,617</div><div class="c n" style="left:273px;width:60px;border-bottom-color:#000;">103</div><div class="c n" style="left:333px;width:120px;border-bottom-color:#000;">14,978,060</div><div class="c n" style="left:453px;width:127px;border-right-color:#000;border-bottom-color:#000;">999,037</div></div>
<div id="focus" class="a"></div>
<div id="sb" class="a"><div class="sbb a" style="top:0"><div class="arr up"></div></div><div class="sbb a" style="top:499px"></div><div class="sbb a" style="top:515px"><div class="arr dn"></div></div></div>
</div></div>
</body></html>
